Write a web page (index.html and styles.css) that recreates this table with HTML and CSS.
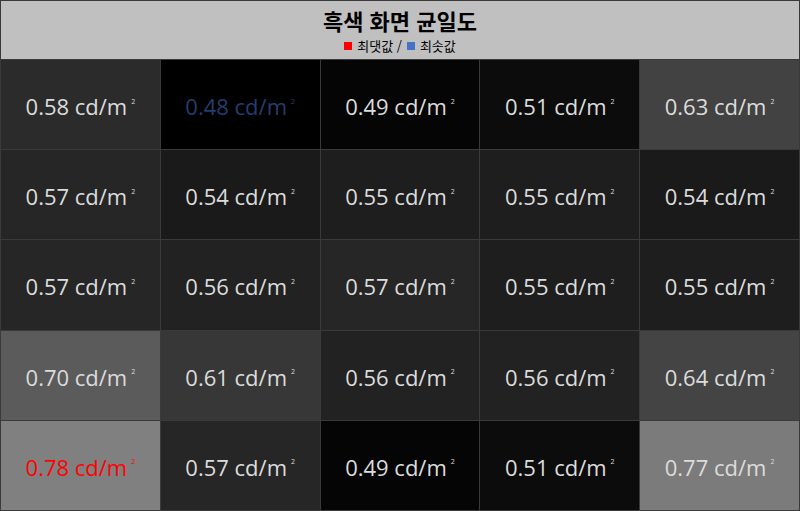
FILE: index.html
```html
<!DOCTYPE html>
<html lang="ko">
<head>
<meta charset="utf-8">
<title>흑색 화면 균일도</title>
<link rel="stylesheet" href="styles.css">
</head>
<body>
<div class="page">
  <header class="head">
    <h1 class="title">흑색 화면 균일도</h1>
    <div class="legend"><span class="sw sw-max"></span><span class="lbl">최댓값 /</span><span class="sw sw-min"></span><span class="lbl">최솟값</span></div>
  </header>
  <div class="grid">
    <div class="cell" style="background:#2b2b2b">0.58 cd/m<sup>2</sup></div>
    <div class="cell min" style="background:#000">0.48 cd/m<sup>2</sup></div>
    <div class="cell" style="background:#050505">0.49 cd/m<sup>2</sup></div>
    <div class="cell" style="background:#0c0c0c">0.51 cd/m<sup>2</sup></div>
    <div class="cell" style="background:#424242">0.63 cd/m<sup>2</sup></div>

    <div class="cell" style="background:#262626">0.57 cd/m<sup>2</sup></div>
    <div class="cell" style="background:#1a1a1a">0.54 cd/m<sup>2</sup></div>
    <div class="cell" style="background:#1e1e1e">0.55 cd/m<sup>2</sup></div>
    <div class="cell" style="background:#1e1e1e">0.55 cd/m<sup>2</sup></div>
    <div class="cell" style="background:#1a1a1a">0.54 cd/m<sup>2</sup></div>

    <div class="cell" style="background:#262626">0.57 cd/m<sup>2</sup></div>
    <div class="cell" style="background:#222">0.56 cd/m<sup>2</sup></div>
    <div class="cell" style="background:#262626">0.57 cd/m<sup>2</sup></div>
    <div class="cell" style="background:#1e1e1e">0.55 cd/m<sup>2</sup></div>
    <div class="cell" style="background:#1e1e1e">0.55 cd/m<sup>2</sup></div>

    <div class="cell" style="background:#5b5b5b">0.70 cd/m<sup>2</sup></div>
    <div class="cell" style="background:#373737">0.61 cd/m<sup>2</sup></div>
    <div class="cell" style="background:#222">0.56 cd/m<sup>2</sup></div>
    <div class="cell" style="background:#222">0.56 cd/m<sup>2</sup></div>
    <div class="cell" style="background:#444">0.64 cd/m<sup>2</sup></div>

    <div class="cell max" style="background:#808080">0.78 cd/m<sup>2</sup></div>
    <div class="cell" style="background:#262626">0.57 cd/m<sup>2</sup></div>
    <div class="cell" style="background:#050505">0.49 cd/m<sup>2</sup></div>
    <div class="cell" style="background:#0c0c0c">0.51 cd/m<sup>2</sup></div>
    <div class="cell" style="background:#7b7b7b">0.77 cd/m<sup>2</sup></div>
  </div>
</div>
</body>
</html>
```
FILE: styles.css
```css
* { box-sizing: border-box; }
html, body { margin: 0; padding: 0; }
body {
  width: 800px;
  height: 511px;
  background: #3a3a3a;
  font-family: "Open Sans", "Noto Sans", "Noto Sans CJK KR", sans-serif;
  overflow: hidden;
}
.page {
  width: 800px;
  height: 511px;
  border: 1px solid #3a3a3a;
  display: flex;
  flex-direction: column;
  background: #3a3a3a;
}
.head {
  height: 58px;
  background: #c0c0c0;
  display: flex;
  flex-direction: column;
  align-items: center;
  padding-top: 3px;
  margin-bottom: 1px;
}
.title {
  margin: 0;
  font-family: "Noto Sans CJK KR", sans-serif;
  font-size: 22px;
  font-weight: 700;
  line-height: 32px;
  color: #000;
}
.legend {
  font-family: "Noto Sans CJK KR", sans-serif;
  font-size: 13px;
  line-height: 19px;
  color: #000;
  display: flex;
  align-items: center;
  gap: 5px;
}
.sw {
  display: inline-block;
  width: 8px;
  height: 8px;
}
.sw-max { background: #ff0000; }
.sw-min { background: #4472c4; }
.grid {
  flex: 1;
  display: grid;
  grid-template-columns: repeat(5, 1fr);
  grid-template-rows: repeat(5, 1fr);
  gap: 1px;
}
.cell {
  display: flex;
  align-items: center;
  justify-content: center;
  color: #dcdcdc;
  font-size: 22px;
  padding-top: 3px;
}
.cell sup {
  font-size: 7px;
  margin-left: 4px;
  position: relative;
  top: -5px;
}
.cell.min { color: #253d6e; }
.cell.max { color: #ff0000; }
```
